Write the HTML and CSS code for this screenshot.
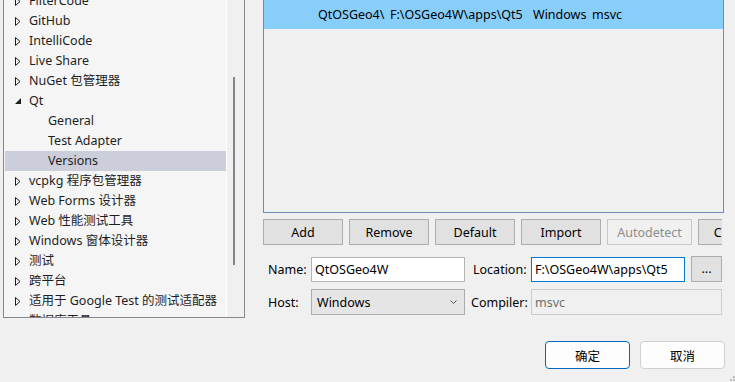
FILE: index.html
```html
<!DOCTYPE html>
<html>
<head>
<meta charset="utf-8">
<link rel="stylesheet" href="styles.css">
</head>
<body>
<div class="window">
  <div class="main">
    <div class="tree">
      <div class="tree-list">
        <div class="row"><span class="tw"><svg width="6" height="9" viewBox="0 0 6 9"><path d="M0.5 0.5 L5 4.5 L0.5 8.5 Z" fill="none" stroke="#1e1e1e"/></svg></span>FilterCode</div>
        <div class="row"><span class="tw"><svg width="6" height="9" viewBox="0 0 6 9"><path d="M0.5 0.5 L5 4.5 L0.5 8.5 Z" fill="none" stroke="#1e1e1e"/></svg></span>GitHub</div>
        <div class="row"><span class="tw"><svg width="6" height="9" viewBox="0 0 6 9"><path d="M0.5 0.5 L5 4.5 L0.5 8.5 Z" fill="none" stroke="#1e1e1e"/></svg></span>IntelliCode</div>
        <div class="row"><span class="tw"><svg width="6" height="9" viewBox="0 0 6 9"><path d="M0.5 0.5 L5 4.5 L0.5 8.5 Z" fill="none" stroke="#1e1e1e"/></svg></span>Live Share</div>
        <div class="row"><span class="tw"><svg width="6" height="9" viewBox="0 0 6 9"><path d="M0.5 0.5 L5 4.5 L0.5 8.5 Z" fill="none" stroke="#1e1e1e"/></svg></span>NuGet 包管理器</div>
        <div class="row"><span class="tw"><svg width="6" height="6" viewBox="0 0 6 6"><path d="M6 0 L6 6 L0 6 Z" fill="#1e1e1e"/></svg></span>Qt</div>
        <div class="row child">General</div>
        <div class="row child">Test Adapter</div>
        <div class="row child sel">Versions</div>
        <div class="row"><span class="tw"><svg width="6" height="9" viewBox="0 0 6 9"><path d="M0.5 0.5 L5 4.5 L0.5 8.5 Z" fill="none" stroke="#1e1e1e"/></svg></span>vcpkg 程序包管理器</div>
        <div class="row"><span class="tw"><svg width="6" height="9" viewBox="0 0 6 9"><path d="M0.5 0.5 L5 4.5 L0.5 8.5 Z" fill="none" stroke="#1e1e1e"/></svg></span>Web Forms 设计器</div>
        <div class="row"><span class="tw"><svg width="6" height="9" viewBox="0 0 6 9"><path d="M0.5 0.5 L5 4.5 L0.5 8.5 Z" fill="none" stroke="#1e1e1e"/></svg></span>Web 性能测试工具</div>
        <div class="row"><span class="tw"><svg width="6" height="9" viewBox="0 0 6 9"><path d="M0.5 0.5 L5 4.5 L0.5 8.5 Z" fill="none" stroke="#1e1e1e"/></svg></span>Windows 窗体设计器</div>
        <div class="row"><span class="tw"><svg width="6" height="9" viewBox="0 0 6 9"><path d="M0.5 0.5 L5 4.5 L0.5 8.5 Z" fill="none" stroke="#1e1e1e"/></svg></span>测试</div>
        <div class="row"><span class="tw"><svg width="6" height="9" viewBox="0 0 6 9"><path d="M0.5 0.5 L5 4.5 L0.5 8.5 Z" fill="none" stroke="#1e1e1e"/></svg></span>跨平台</div>
        <div class="row"><span class="tw"><svg width="6" height="9" viewBox="0 0 6 9"><path d="M0.5 0.5 L5 4.5 L0.5 8.5 Z" fill="none" stroke="#1e1e1e"/></svg></span>适用于 Google Test 的测试适配器</div>
        <div class="row"><span class="tw"><svg width="6" height="9" viewBox="0 0 6 9"><path d="M0.5 0.5 L5 4.5 L0.5 8.5 Z" fill="none" stroke="#1e1e1e"/></svg></span>数据库工具</div>
      </div>
      <div class="vscroll"><div class="thumb"></div></div>
    </div>
    <div class="right">
      <div class="listbox">
        <div class="lrow sel">
          <span class="c1">QtOSGeo4\</span><span class="c2">F:\OSGeo4W\apps\Qt5</span><span class="c3">Windows</span><span class="c4">msvc</span>
        </div>
      </div>
      <div class="btnrow">
        <button class="btn w80">Add</button>
        <button class="btn w80">Remove</button>
        <button class="btn w80">Default</button>
        <button class="btn w80">Import</button>
        <button class="btn w85 disabled">Autodetect</button>
        <button class="btn w80">Cleanup</button>
      </div>
      <div class="form">
        <div class="frow">
          <label class="lbl lbl-first">Name:</label>
          <div class="field w154">QtOSGeo4W</div>
          <label class="lbl lbl-second">Location:</label>
          <div class="field w154 focus">F:\OSGeo4W\apps\Qt5</div>
          <button class="btn browse">...</button>
        </div>
        <div class="frow">
          <label class="lbl lbl-first">Host:</label>
          <div class="combo w154"><span>Windows</span><svg width="7" height="4" viewBox="0 0 7 4"><path d="M0.5 0.5 L3.5 3.5 L6.5 0.5" fill="none" stroke="#555"/></svg></div>
          <label class="lbl lbl-third">Compiler:</label>
          <div class="field w191 ro">msvc</div>
        </div>
      </div>
    </div>
  </div>
  <div class="footer">
    <button class="dlg ok">确定</button>
    <button class="dlg">取消</button>
  </div>
  <svg class="grip" width="6" height="6" viewBox="0 0 6 6">
    <rect x="4" y="0" width="2" height="2" fill="#bcbcbc"/>
    <rect x="1" y="3" width="2" height="2" fill="#bcbcbc"/>
    <rect x="4" y="3" width="2" height="2" fill="#bcbcbc"/>
  </svg>
</div>
</body>
</html>
```

FILE: styles.css
```css
* { box-sizing: border-box; }
html, body { margin: 0; padding: 0; }
body {
  width: 735px;
  height: 382px;
  overflow: hidden;
  background: #f0f0f0;
  font-family: "Noto Sans", "Noto Sans CJK SC", sans-serif;
  font-size: 12.5px;
  color: #000;
}
.window {
  position: relative;
  width: 735px;
  height: 382px;
}
.main {
  display: flex;
  align-items: flex-start;
}
.tree {
  margin-left: 3px;
  width: 242px;
  height: 318px;
  border: 1px solid #828790;
  border-top: none;
  display: flex;
  overflow: hidden;
}
.tree-list {
  width: 222px;
  height: 100%;
  background: #f5f5f5;
  border-right: 1px solid #ffffff;
  box-sizing: content-box;
  overflow: hidden;
}
.row {
  height: 20px;
  line-height: 20px;
  margin-left: 1px;
  padding-left: 10px;
  color: #1e1e1e;
  white-space: nowrap;
  display: flex;
  align-items: center;
}
.row:first-child { margin-top: -9px; }
.tw {
  width: 14px;
  display: flex;
  align-items: center;
}
.tw svg { display: block; }
.row.child { padding-left: 43px; }
.row.sel { background: #cccedb; }
.vscroll {
  width: 17px;
  height: 100%;
  background: #f0f0f0;
}
.thumb {
  margin-left: 6px;
  margin-top: 77px;
  width: 2px;
  height: 188px;
  background: #868686;
}
.right {
  margin-left: 18px;
  width: 461px;
}
.listbox {
  height: 213px;
  border: 1px solid #6d8cb3;
  border-top: none;
  background: #f0f0f0;
}
.lrow {
  height: 29px;
  display: flex;
  align-items: center;
  padding-left: 54px;
  white-space: nowrap;
}
.lrow.sel { background: #87cefa; }
.c1 { width: 72px; }
.c2 { width: 143px; }
.c3 { width: 59px; }
.btnrow {
  margin-top: 6px;
  width: 459px;
  display: flex;
  gap: 6px;
  overflow: hidden;
}
.btn {
  flex: none;
  height: 26px;
  background: #e1e1e1;
  border: 1px solid #adadad;
  font: inherit;
  color: #000;
  padding: 0;
}
.w80 { width: 80px; }
.w85 { width: 85px; }
.btn.disabled {
  background: #f0f0f0;
  border-color: #c8c8c8;
  color: #8d8d8d;
}
.form {
  margin-top: 11px;
  display: flex;
  flex-direction: column;
  gap: 7px;
}
.frow {
  display: flex;
  align-items: center;
  height: 26px;
}
.lbl {
  white-space: nowrap;
}
.lbl-first { width: 48px; padding-left: 5px; }
.lbl-second { width: 66px; padding-left: 8px; }
.lbl-third { width: 66px; padding-left: 6px; }
.field {
  height: 25px;
  background: #fff;
  border: 1px solid #b4b4b4;
  padding-left: 3px;
  display: flex;
  align-items: center;
  white-space: nowrap;
}
.w154 { width: 154px; }
.w191 { width: 191px; height: 26px; }
.field.focus { border-color: #0078d7; }
.field.ro {
  background: #f0f0f0;
  border-color: #cccccc;
  color: #6d6d6d;
}
.browse {
  margin-left: 6px;
  width: 31px;
  line-height: 18px;
}
.combo {
  height: 26px;
  background: #e5e5e5;
  border: 1px solid #adadad;
  display: flex;
  align-items: center;
  justify-content: space-between;
  padding: 0 7px 0 5px;
}
.combo svg { display: block; }
.footer {
  margin-top: 23px;
  display: flex;
  justify-content: flex-end;
  gap: 10px;
  padding-right: 10px;
}
.dlg {
  width: 85px;
  height: 28px;
  background: #fdfdfd;
  border: 1px solid #d0d0d0;
  border-radius: 4px;
  font: inherit;
  color: #000;
  padding: 0;
}
.dlg.ok {
  border-color: #0067c0;
}
.grip {
  position: absolute;
  right: 0;
  bottom: 0;
}
```
